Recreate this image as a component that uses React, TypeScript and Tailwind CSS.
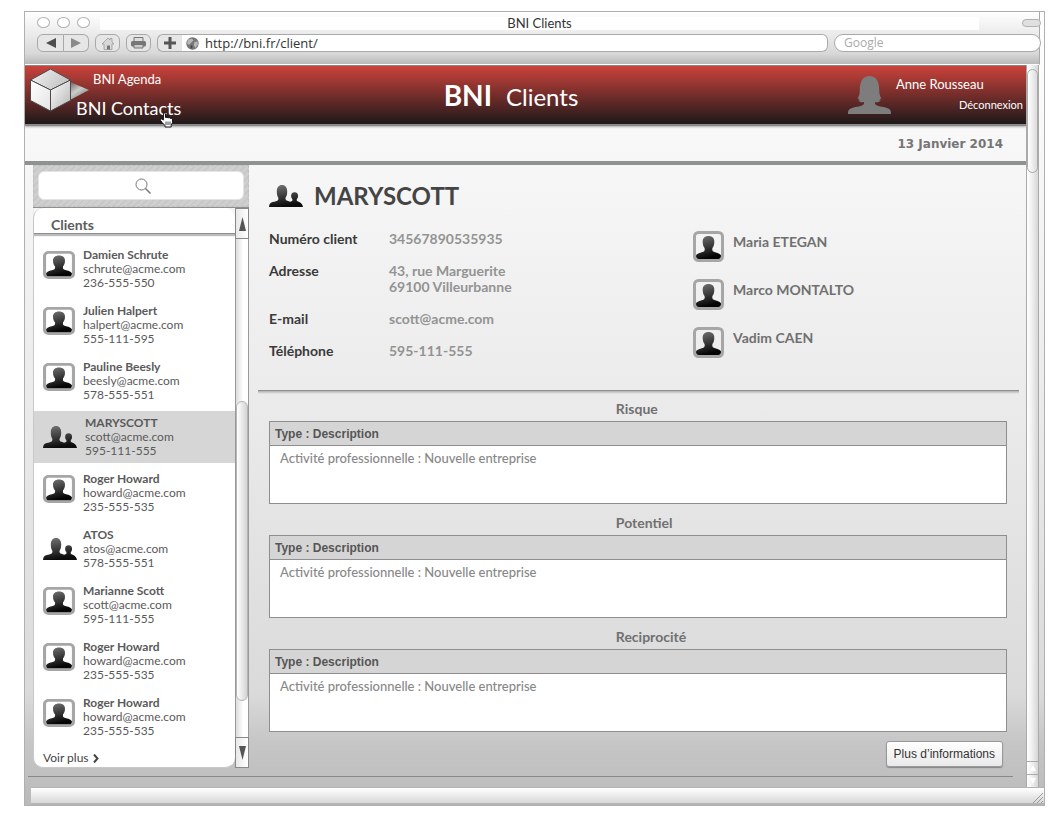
import React, { useId } from "react";

type Client = { name: string; email: string; phone: string; company?: boolean; selected?: boolean };

const clients: Client[] = [
  { name: "Damien Schrute", email: "schrute@acme.com", phone: "236-555-550" },
  { name: "Julien Halpert", email: "halpert@acme.com", phone: "555-111-595" },
  { name: "Pauline Beesly", email: "beesly@acme.com", phone: "578-555-551" },
  { name: "MARYSCOTT", email: "scott@acme.com", phone: "595-111-555", company: true, selected: true },
  { name: "Roger Howard", email: "howard@acme.com", phone: "235-555-535" },
  { name: "ATOS", email: "atos@acme.com", phone: "578-555-551", company: true },
  { name: "Marianne Scott", email: "scott@acme.com", phone: "595-111-555" },
  { name: "Roger Howard", email: "howard@acme.com", phone: "235-555-535" },
  { name: "Roger Howard", email: "howard@acme.com", phone: "235-555-535" },
];

const details: [string, string[]][] = [
  ["Numéro client", ["34567890535935"]],
  ["Adresse", ["43, rue Marguerite", "69100 Villeurbanne"]],
  ["E-mail", ["scott@acme.com"]],
  ["Téléphone", ["595-111-555"]],
];

const members = ["Maria ETEGAN", "Marco MONTALTO", "Vadim CAEN"];
const sections = ["Risque", "Potentiel", "Reciprocité"];

function PersonAvatar({ compact }: { compact?: boolean }) {
  const id = useId();
  return (
    <svg
      viewBox="0 0 31 31"
      preserveAspectRatio="none"
      className={compact ? "mb-2 h-[28px] w-[32px] shrink-0" : "h-[31px] w-[31px] shrink-0"}
      aria-hidden="true"
    >
      <defs>
        <linearGradient id={id} x1="0" y1="0" x2="0.3" y2="1">
          <stop offset="0" stopColor="#787878" />
          <stop offset="1" stopColor="#050505" />
        </linearGradient>
      </defs>
      <rect x="1.5" y="1.5" width="28" height="28" rx="4" fill="none" stroke="#a6a6a6" strokeWidth="3" />
      <path
        d="M15.500 5c-3.800 0-6 2.300-5.800 6 .1 2.500.6 4.500 1.900 6 .3 1.900 0 3-.9 3.600-2.700 1.300-6.200 1.400-7.700 3.900-.1 2.200.8 3.500 2.800 3.500h19.400c2 0 2.900-1.300 2.800-3.500-1.500-2.500-5-2.600-7.700-3.900-.9-.6-1.200-1.700-.9-3.600 1.300-1.500 1.800-3.500 1.900-6 .2-3.700-2-6-5.800-6z"
        fill={`url(#${id})`}
      />
    </svg>
  );
}

function GroupIcon() {
  const id = useId();
  return (
    <svg viewBox="0 0 34 22" className="h-[22px] w-[34px] shrink-0" aria-hidden="true">
      <defs>
        <linearGradient id={id} x1="0" y1="0" x2="0.25" y2="1">
          <stop offset="0" stopColor="#787878" />
          <stop offset="1" stopColor="#0c0c0c" />
        </linearGradient>
      </defs>
      <path
        d="M0 22c.3-3 1.200-4.200 3.500-4.900 2.400-.8 4.700-1 5.600-2.200.4-.8.4-1.600.1-2.500C8.100 11 7.800 9 7.800 6.500 7.700 2.500 9.800 0 13 0s5.300 2.500 5.200 6.500c0 2.500-.3 4.500-1.500 5.800-.3 1-.3 1.800.1 2.500.7 1 2.600 1.300 4.400 1.900.9-.3 1.700-.5 2.100-1 .3-.4.3-1 0-1.600-.8-.9-1.200-2-1.200-3.200 0-2.200 1.200-3.700 3.500-3.700s3.500 1.500 3.500 3.700c0 1.200-.4 2.300-1.200 3.200-.3.600-.3 1.200 0 1.600 1.100 1.300 5.500 1.600 6.100 6.300z"
        fill={`url(#${id})`}
      />
    </svg>
  );
}

function Logo() {
  return (
    <svg viewBox="0 0 60 44" className="mt-[2px] h-[44px] w-[60px] shrink-0" aria-hidden="true">
      <defs>
        <linearGradient id="cone" x1="0" y1="0" x2="0.7" y2="1">
          <stop offset="0" stopColor="#666" />
          <stop offset="0.5" stopColor="#ccc" />
          <stop offset="1" stopColor="#777" />
        </linearGradient>
        <linearGradient id="cubeTop" x1="0" y1="0" x2="1" y2="0.4">
          <stop offset="0" stopColor="#f4f4f4" />
          <stop offset="1" stopColor="#c4c4c4" />
        </linearGradient>
        <linearGradient id="cubeLeft" x1="0" y1="0" x2="1" y2="1">
          <stop offset="0" stopColor="#fff" />
          <stop offset="1" stopColor="#e4e4e4" />
        </linearGradient>
        <linearGradient id="cubeRight" x1="0" y1="0" x2="1" y2="1">
          <stop offset="0" stopColor="#fff" />
          <stop offset="1" stopColor="#b4b4b4" />
        </linearGradient>
      </defs>
      <path d="M40 14l19 8-19 10z" fill="url(#cone)" />
      <g stroke="#4a4a4a" strokeWidth="1" strokeLinejoin="round">
        <path d="M20.500 1l20 11-20 10-20-10z" fill="url(#cubeTop)" />
        <path d="M.5 12l20 10v21l-20-10.500z" fill="url(#cubeLeft)" />
        <path d="M40.500 12l-20 10v21l20-10.500z" fill="url(#cubeRight)" />
      </g>
    </svg>
  );
}

function HandCursor() {
  return (
    <svg viewBox="0 0 14 16" className="absolute top-[20px] left-[83px] h-4 w-[15px]" aria-hidden="true">
      <path
        d="M4 1.200c.8-.6 1.800-.2 2 .8v3.500l1.500-.3 1 .6 1.300-.2 1 .8h1.200l1 .8v3.300l-1.300 3V15H5.500v-1.500L2.800 10.700.8 8.200c0-1.200 1-1.500 1.900-1l1.100.9z"
        fill="#fff"
        stroke="#111"
        strokeWidth="1"
      />
      <path d="M6.500 9.500V13M8.500 9.500V13M10.500 9.500V13" stroke="#111" strokeWidth=".8" />
    </svg>
  );
}

function BrowserChrome() {
  const btn = "flex h-[18px] items-center justify-center border border-[#a9a9a9] bg-[#e6e6e6]";
  return (
    <div className="border-r border-b border-r-[#a9a9a9] border-b-white bg-[linear-gradient(#fff,#ececec_40%,#d8d8d8_80%,#b8b8b8)] pb-3">
      <div className="-mr-[2px] flex h-[22px] items-center pl-3">
        <div className="flex w-[63px] shrink-0 gap-[7px] pb-[2px]">
          <span className="h-[11px] w-[13px] rounded-[50%] border border-[#b0b0b0] bg-white" />
          <span className="h-[11px] w-[13px] rounded-[50%] border border-[#b0b0b0] bg-white" />
          <span className="h-[11px] w-[13px] rounded-[50%] border border-[#b0b0b0] bg-white" />
        </div>
        <div className="h-[13px] flex-1 bg-white text-center text-[13px] leading-[13px] text-[#333]">BNI Clients</div>
        <div className="flex w-[62px] justify-end">
          <span className="h-2 w-[19px] rounded-[4px] border border-[#b0b0b0] bg-[#e0e0e0]" />
        </div>
      </div>
      <div className="-mr-[2px] flex pl-3">
        <button className={`${btn} w-[27px] rounded-l-[6px]`} aria-label="Précédent">
          <svg width="10" height="10" viewBox="0 0 10 10"><path d="M0 5l10-5v10z" fill="#4d4d4d" /></svg>
        </button>
        <button className={`${btn} mr-[6px] w-[25px] rounded-r-[6px] border-l-0`} aria-label="Suivant">
          <svg width="10" height="10" viewBox="0 0 10 10"><path d="M10 5L0 0v10z" fill="#8a8a8a" /></svg>
        </button>
        <button className={`${btn} mr-[6px] w-[25px] rounded-[6px]`} aria-label="Accueil">
          <svg width="14" height="13" viewBox="0 0 14 13">
            <path d="M1 7l6-6 2 2V1.500h2V5l2 2h-2v5.500H3V7z" fill="#d8d8d8" stroke="#9a9a9a" strokeWidth=".8" />
            <path d="M6 8.500h3v4H6z" fill="#777" />
          </svg>
        </button>
        <button className={`${btn} mr-[6px] w-[25px] rounded-[6px]`} aria-label="Imprimer">
          <svg width="15" height="12" viewBox="0 0 15 12">
            <path d="M3 .5h9V5H3z" fill="#ddd" stroke="#777" />
            <rect y="4" width="15" height="5.500" rx="1.500" fill="#777" />
            <path d="M3 7.500h9v3.500H3z" fill="#ccc" stroke="#777" />
          </svg>
        </button>
        <button className={`${btn} w-[25px] rounded-l-[6px] border-r-0`} aria-label="Ajouter un signet">
          <svg width="12" height="12" viewBox="0 0 12 12"><path d="M6 0v12M0 6h12" stroke="#555" strokeWidth="3" /></svg>
        </button>
        <label className="mr-[6px] flex h-[18px] flex-1 items-center gap-[6px] rounded-r-[6px] border border-l-0 border-[#a9a9a9] bg-white pl-[4px]">
          <svg width="13" height="13" viewBox="0 0 13 13" aria-hidden="true">
            <circle cx="6.500" cy="6.500" r="6.200" fill="#777" />
            <path d="M2 2.500l4-.8 1.500 1.600-2 2L3 8 1.200 6.500zM8.500 5l3-.5.5 3-2.500 3.500-1.700-3z" fill="#b8b8b8" />
            <path d="M5 8l1.500 1-.5 3-1.500-1.500z" fill="#444" />
          </svg>
          <input
            aria-label="Adresse web"
            defaultValue="http://bni.fr/client/"
            className="min-w-0 flex-1 bg-transparent font-['Open_Sans',sans-serif] text-[13px] leading-4 text-[#333] outline-none"
          />
        </label>
        <input
          aria-label="Recherche Google"
          placeholder="Google"
          className="h-[18px] w-[207px] rounded-full border border-[#a9a9a9] bg-white px-[9px] font-['Open_Sans',sans-serif] text-[12px] text-[#333] outline-none placeholder:text-[#aaa]"
        />
      </div>
    </div>
  );
}

function Header() {
  return (
    <header className="relative flex h-[59px] border-t border-[#888] bg-[linear-gradient(#cb423b,#231a1b_97%)] text-white shadow-[0_2px_0_#8a8a8a,0_3px_2px_#aaa]">
      <nav className="flex flex-1 items-start pl-[5px]">
        <Logo />
        <div className="-ml-[14px] flex flex-col">
          <a href="#agenda" className="ml-[17px] text-[13px] leading-[26px]">BNI Agenda</a>
          <a href="#contacts" className="relative text-[18px] leading-[32px]">
            BNI Contacts
            <HandCursor />
          </a>
        </div>
      </nav>
      <h1 className="flex items-baseline gap-[14px] text-[24px] leading-[58px]">
        <span className="text-[28px] font-bold">BNI</span>
        Clients
      </h1>
      <div className="flex flex-1 justify-end pl-[34px]">
        <svg viewBox="0 0 43 38" className="mt-[10px] mr-[5px] h-[38px] w-[43px]" aria-hidden="true">
          <path
            d="M0 38c0-4 1-5 4-6 4-1.500 10-1.500 12-4v-2c-2 .5-4 .3-5-.2l1.500-1c-1.500 0-2-.3-2.500-.8l1.500-.8-2-1c2-2 2.200-5 2.300-9C12 5 15 0 21.500 0S31 5 31.200 13.200c.1 4 .3 7 2.300 9l-2 1 1.500.8c-.5.5-1 .8-2.500.8l1.500 1c-1 .5-3 .7-5 .2v2c2 2.500 8 2.500 12 4 3 1 4 2 4 6z"
            fill="#7d7d7d"
          />
        </svg>
        <div className="flex flex-col pt-[5px]">
          <span className="text-[13px] leading-[26px]">Anne Rousseau</span>
          <a href="#logout" className="pr-[3px] pl-[63px] text-[11px] leading-4">Déconnexion</a>
        </div>
      </div>
    </header>
  );
}

function ArrowButton({ up }: { up?: boolean }) {
  return (
    <button
      aria-label={up ? "Défiler vers le haut" : "Défiler vers le bas"}
      className="flex h-[31px] w-full shrink-0 items-center justify-center border border-[#888] bg-[linear-gradient(90deg,#e8e8e8,#fff)]"
    >
      <svg width="7" height="14" viewBox="0 0 7 14">
        <path d={up ? "M3.500 0L7 14H0z" : "M3.500 14L7 0H0z"} fill="#555" />
      </svg>
    </button>
  );
}

function Sidebar() {
  return (
    <aside className="flex w-[216px] shrink-0 flex-col">
      <div className="h-[42px] border border-dashed border-[#c0c0c0] bg-[repeating-linear-gradient(135deg,#cfcfcf_0px,#cfcfcf_3px,#c8c8c8_3px,#c8c8c8_5px)] px-1 pt-[5px]">
        <label className="relative block">
          <input aria-label="Rechercher un client" className="block h-[29px] w-full rounded-[6px] border border-[#e4e4e4] bg-white px-2 outline-none" />
          <svg viewBox="0 0 16 16" className="absolute top-[7px] left-[97px] h-4 w-4" fill="none" stroke="#777" aria-hidden="true">
            <circle cx="6.500" cy="6.500" r="5.500" />
            <path d="M10.500 10.500l5 5" strokeWidth="1.500" />
          </svg>
        </label>
      </div>
      <div className="flex border-t border-[#8e9090]">
        <div className="min-w-0 flex-1 rounded-[10px] border-l border-b border-[#c8c8c8] bg-white">
          <h2 className="border-b border-[#8e9090] pt-[9px] pl-[17px] text-[14px] leading-4 font-bold text-[#5c5c5c] shadow-[0_2px_1px_#bbb]">Clients</h2>
          <ul className="pt-[7px] text-[12px] leading-[14px] text-[#5a5a5a]">
            {clients.map((c, i) => (
              <li key={i} className="py-[2px]">
                <a
                  href="#client"
                  className={c.selected ? "flex h-[52px] items-center bg-[#d6d6d6] pl-[9px]" : "flex h-[52px] items-center pl-[9px]"}
                >
                  <span className="flex w-10 shrink-0 items-center">{c.company ? <GroupIcon /> : <PersonAvatar compact />}</span>
                  <span className={c.selected ? "flex flex-col pl-[2px]" : "flex flex-col"}>
                    <span className="font-bold">{c.name}</span>
                    <span>{c.email}</span>
                    <span>{c.phone}</span>
                  </span>
                </a>
              </li>
            ))}
          </ul>
          <a href="#more" className="ml-[9px] flex items-center gap-1 pt-[5px] pb-px text-[12px] leading-4 text-[#444]">
            Voir plus
            <svg width="6" height="9" viewBox="0 0 6 9" aria-hidden="true">
              <path d="M1 .5l3.500 4L1 8.500" fill="none" stroke="#444" strokeWidth="2" />
            </svg>
          </a>
        </div>
        <div className="flex w-[14px] flex-col">
          <ArrowButton up />
          <div className="flex flex-1 flex-col border-x border-[#999] bg-[linear-gradient(90deg,#ddd,#fff_60%)]">
            <div className="h-[162px]" />
            <div className="h-[300px] rounded-full border border-[#b4b4b4] bg-[linear-gradient(90deg,#fff,#d4d4d4)]" />
          </div>
          <ArrowButton />
        </div>
      </div>
    </aside>
  );
}

function Section({ title }: { title: string }) {
  return (
    <section className="h-[114px] pr-3 pl-[11px]">
      <h3 className="ml-[47%] text-[14px] leading-[20px] font-bold text-[#707070]">{title}</h3>
      <table className="mt-[2px] w-full border-collapse text-left">
        <thead>
          <tr>
            <th className="h-6 border border-[#8e8e8e] bg-[#d5d5d5] px-[5px] font-['Liberation_Sans',sans-serif] text-[12px] leading-4 font-bold text-[#555]">
              Type : Description
            </th>
          </tr>
        </thead>
        <tbody>
          <tr>
            <td className="h-[58px] border border-[#8e8e8e] bg-white px-[10px] pt-1 align-top text-[13px] leading-4 font-medium text-[#888]">
              Activité professionnelle : Nouvelle entreprise
            </td>
          </tr>
        </tbody>
      </table>
    </section>
  );
}

function ClientPage() {
  return (
    <main className="min-w-0 flex-1 pt-[14px] pr-[7px] pl-[9px]">
      <div className="border-b border-[#8e9090] px-[11px] pb-[31px]">
        <h2 className="flex items-center gap-[11px] text-[24px] leading-[34px] font-bold text-[#444]">
          <GroupIcon />
          MARYSCOTT
        </h2>
        <div className="flex pt-[18px]">
          <dl className="grid w-[424px] shrink-0 grid-cols-[120px_1fr] content-start gap-y-4 text-[14px] leading-4 font-bold">
            {details.map(([label, lines]) => (
              <React.Fragment key={label}>
                <dt className="text-[#3a3a3a]">{label}</dt>
                <dd className="text-[#939393]">
                  {lines.map((l) => (
                    <span key={l} className="block">{l}</span>
                  ))}
                </dd>
              </React.Fragment>
            ))}
          </dl>
          <ul className="flex flex-col gap-4 text-[14px] font-bold text-[#707070]">
            {members.map((m) => (
              <li key={m} className="flex h-8 gap-[9px] leading-[22px]">
                <PersonAvatar />
                {m}
              </li>
            ))}
          </ul>
        </div>
      </div>
      <div className="h-[3px] bg-[linear-gradient(#b0b0b0,transparent)]" />
      <div className="pt-[5px]">
        {sections.map((s) => (
          <Section key={s} title={s} />
        ))}
      </div>
      <div className="flex justify-end pr-4">
        <button className="h-[26px] rounded-[3px] border border-[#999] bg-[linear-gradient(#fff,#e9e9e9)] px-[7px] font-['Liberation_Sans',sans-serif] text-[12px] text-[#333] shadow-[0_1px_1px_#888]">
          Plus d’informations
        </button>
      </div>
    </main>
  );
}

function WindowScrollbar() {
  return (
    <div className="flex w-[13px] shrink-0 flex-col border-x border-[#aaa] bg-[linear-gradient(90deg,#fff,#f2f2f2_40%,#d6d6d6)] pt-1">
      <div className="h-[104px] rounded-full border border-[#aaa] bg-[linear-gradient(90deg,#fff,#dcdcdc)]" />
      <div className="flex-1" />
      <div className="flex h-[13px] items-center justify-center border-t border-[#aaa]">
        <svg width="6" height="6" viewBox="0 0 6 6" aria-hidden="true"><path d="M3 0l3 6H0z" fill="#fff" /></svg>
      </div>
      <div className="flex h-[13px] items-center justify-center border-t border-[#aaa]">
        <svg width="6" height="6" viewBox="0 0 6 6" aria-hidden="true"><path d="M3 6l3-6H0z" fill="#fff" /></svg>
      </div>
    </div>
  );
}

export default function App() {
  return (
    <div className="min-h-screen bg-white pt-[11px] pr-3 pb-[10px] pl-6 font-[Lato,sans-serif]">
      <div className="border border-[#b0b0b0] bg-[linear-gradient(#fff,#f7f7f7_18%,#ebebeb_49%,#dadada_86%,#c6c6c6_92%,#bababa)]">
        <div className="pr-[4px]">
          <BrowserChrome />
        </div>
        <div className="flex">
          <div className="min-w-0 flex-1">
            <Header />
            <div className="flex h-[41px] items-center justify-end border-b-4 border-[#909292] pt-[2px] pr-[23px] font-['DejaVu_Sans',sans-serif] text-[12px] font-bold text-[#757575]">
              13 Janvier 2014
            </div>
            <div className="flex pl-2">
              <Sidebar />
              <ClientPage />
            </div>
            <div className="mt-[8px] mr-[13px] mb-[10px] ml-[3px] border-b border-[#888] shadow-[0_2px_2px_-1px_#888]" />
          </div>
          <WindowScrollbar />
          <div className="w-[5px] shrink-0" />
        </div>
        <div className="flex pl-[6px]">
          <div className="flex h-[18px] flex-1 items-end justify-end border-t border-b-2 border-[#b4b4b4] bg-[linear-gradient(#fff,#d8d8d8)]">
            <svg width="11" height="11" viewBox="0 0 11 11" aria-hidden="true">
              <path d="M0 11L10 1M4 11l6-6M8 11l2-2" stroke="#999" />
            </svg>
          </div>
        </div>
      </div>
    </div>
  );
}
